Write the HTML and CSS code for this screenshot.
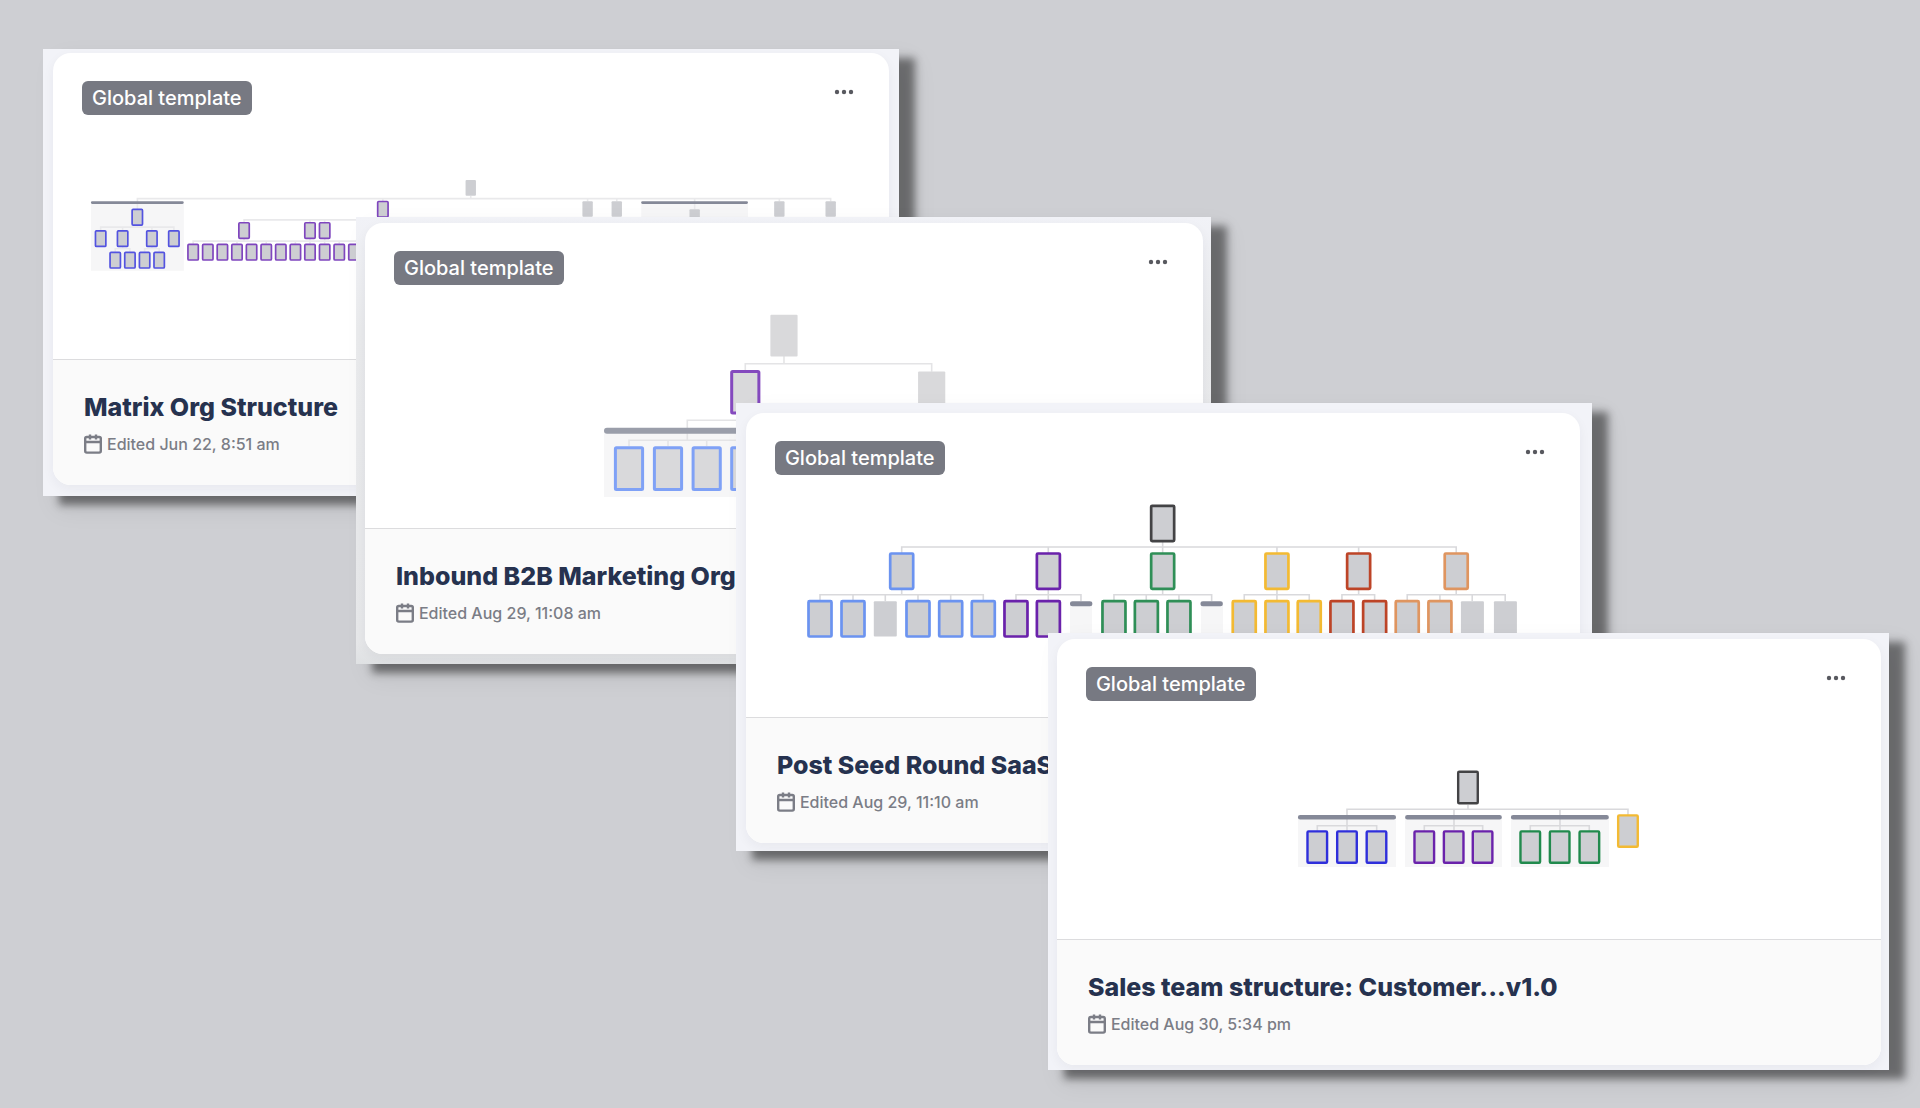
FILE: index.html
```html
<!DOCTYPE html>
<html lang="en">
<head>
    <meta charset="UTF-8">
    <meta name="viewport" content="width=device-width, initial-scale=1.0">
    <title>Org Chart Templates</title>
    <link rel="stylesheet" href="styles.css">
</head>
<body>
    <svg class="sprite" aria-hidden="true">
        <symbol id="dots" viewBox="0 0 30 22">
            <circle cx="8" cy="11" r="2.2"/>
            <circle cx="15" cy="11" r="2.2"/>
            <circle cx="22" cy="11" r="2.2"/>
        </symbol>
        <symbol id="calendar" viewBox="0 0 18 20">
            <rect x="1.2" y="3" width="15.6" height="15.6" rx="1.6"/>
            <path d="M1 8h16M6 0.5v5M12 0.5v5"/>
        </symbol>
    </svg>

    <main class="canvas">
        <!-- Matrix -->
        <section class="frame frame-matrix">
            <article class="card">
                <div class="card-top">
                    <span class="badge">Global template</span>
                    <button class="more" type="button" aria-label="More options"><svg><use href="#dots"/></svg></button>
                </div>
                <svg class="chart chart-matrix" viewBox="53 115 837 244">
                    <rect class="group" x="91" y="202" width="93" height="69"/>
                    <rect class="group" x="642" y="202" width="107" height="69"/>
                    <path class="line" d="M471.3 196v2.7M137.5 209.5V198.7H831.7v3M383.3 198.7v3M588.3 198.7v3M617.5 198.7v3M695.5 198.7v11M780.3 198.7v3"/>
                    <path class="line" d="M137.5 225v2.3M100.7 231v-3.7H174v3.7M122.7 227.3v3M152 227.3v3M122.7 247v2M115.3 252v-3H130v3M152 247v2M144.7 252v-3h14.6v3"/>
                    <path class="line" d="M244.3 223v-3H420M310.3 220v3M325 220v3M193.3 244v-2.7H420M244.3 239v2M310.3 239v5M325 239v5M237.2 241v3M266.5 241v3M295.7 241v3M339.6 241v3"/>
                    <path class="bar" d="M92.3 202.7h90.2M643.3 202.7h104.2"/>
                    <g class="grey">
                        <rect x="466.1" y="180.2"/>
                        <rect x="583.1" y="201.4"/>
                        <rect x="612.3" y="201.4"/>
                        <rect x="690.3" y="209.4"/>
                        <rect x="775.1" y="201.4"/>
                        <rect x="826.5" y="201.4"/>
                    </g>
                    <g class="blue">
                        <rect x="132.2" y="209.6"/>
                        <rect x="95.5" y="231"/>
                        <rect x="117.5" y="231"/>
                        <rect x="146.8" y="231"/>
                        <rect x="168.8" y="231"/>
                        <rect x="110.1" y="252.6"/>
                        <rect x="124.8" y="252.6"/>
                        <rect x="139.5" y="252.6"/>
                        <rect x="154.1" y="252.6"/>
                    </g>
                    <g class="purple">
                        <rect x="378.1" y="201.6"/>
                        <rect x="239.1" y="222.9"/>
                        <rect x="305.1" y="222.9"/>
                        <rect x="319.8" y="222.9"/>
                        <rect x="188.1" y="244.6"/>
                        <rect x="202.8" y="244.6"/>
                        <rect x="217.4" y="244.6"/>
                        <rect x="232" y="244.6"/>
                        <rect x="246.6" y="244.6"/>
                        <rect x="261.3" y="244.6"/>
                        <rect x="275.9" y="244.6"/>
                        <rect x="290.5" y="244.6"/>
                        <rect x="305.1" y="244.6"/>
                        <rect x="319.8" y="244.6"/>
                        <rect x="334.4" y="244.6"/>
                        <rect x="349.1" y="244.6"/>
                    </g>
                </svg>
                <div class="card-info">
                    <h2 class="title">Matrix Org Structure</h2>
                    <p class="edited"><svg class="cal"><use href="#calendar"/></svg>Edited Jun 22, 8:51 am</p>
                </div>
            </article>
        </section>

        <!-- Inbound marketing -->
        <section class="frame frame-inbound">
            <article class="card">
                <div class="card-top">
                    <span class="badge">Global template</span>
                    <button class="more" type="button" aria-label="More options"><svg><use href="#dots"/></svg></button>
                </div>
                <svg class="chart chart-inbound" viewBox="365 285 838 243">
                    <rect class="group" x="604" y="431" width="162" height="66"/>
                    <path class="line" d="M784 356v7.7M745.3 370v-6.3h186.4v8M745.3 413v7.3M687.3 440V420.3H800M629 446v-5.7h116.3v6M668 440v6M706.7 440v6"/>
                    <path class="bar" d="M607 430.7h156"/>
                    <g class="grey">
                        <rect x="770.4" y="314.8"/>
                        <rect x="918.1" y="371.4"/>
                    </g>
                    <g class="purple">
                        <rect x="731.7" y="371.4"/>
                    </g>
                    <g class="blue">
                        <rect x="615.4" y="447.8"/>
                        <rect x="654.4" y="447.8"/>
                        <rect x="693.1" y="447.8"/>
                        <rect x="731.7" y="447.8"/>
                    </g>
                </svg>
                <div class="card-info">
                    <h2 class="title">Inbound B2B Marketing Org</h2>
                    <p class="edited"><svg class="cal"><use href="#calendar"/></svg>Edited Aug 29, 11:08 am</p>
                </div>
            </article>
        </section>

        <!-- Post seed SaaS -->
        <section class="frame frame-saas">
            <article class="card">
                <div class="card-top">
                    <span class="badge">Global template</span>
                    <button class="more" type="button" aria-label="More options"><svg><use href="#dots"/></svg></button>
                </div>
                <svg class="chart chart-saas" viewBox="746 475 834 242">
                    <rect class="group" x="1070" y="604" width="22" height="33"/>
                    <rect class="group" x="1201" y="604" width="22" height="33"/>
                    <path class="line" d="M1162.7 542v11M901.7 553v-6h554.6v6M1048.3 547v6M1277 547v6M1358.7 547v6"/>
                    <path class="line" d="M901.7 589v5.7M820 601v-6.3h163.3v6.3M853 595v6M885.3 595v6M918 595v6M950.7 595v6M1048.3 589v12M1016 601v-6.3h65v6.3"/>
                    <path class="line" d="M1162.7 589v5.7M1114 601v-6.3h97.7v6.3M1146.3 595v6M1179 595v6M1277 589v12M1244.3 601v-6.3h65v6.3"/>
                    <path class="line" d="M1358.7 589v5.7M1342 601v-6.3h32.7v6.3M1456.3 589v5.7M1407.3 601v-6.3h98v6.3M1440 595v6M1472.3 595v6"/>
                    <path class="bar" d="M1072.5 603.7h17.4M1203 603.7h17.4"/>
                    <g class="grey">
                        <rect x="873.8" y="601.2"/>
                        <rect x="1461" y="601.2"/>
                        <rect x="1494" y="601.2"/>
                    </g>
                    <g class="black">
                        <rect x="1151.2" y="505.8"/>
                    </g>
                    <g class="blue">
                        <rect x="890.2" y="553.5"/>
                        <rect x="808.5" y="601.2"/>
                        <rect x="841.5" y="601.2"/>
                        <rect x="906.5" y="601.2"/>
                        <rect x="939.2" y="601.2"/>
                        <rect x="971.8" y="601.2"/>
                    </g>
                    <g class="purple">
                        <rect x="1036.9" y="553.5"/>
                        <rect x="1004.5" y="601.2"/>
                        <rect x="1036.9" y="601.2"/>
                    </g>
                    <g class="green">
                        <rect x="1151.2" y="553.5"/>
                        <rect x="1102.5" y="601.2"/>
                        <rect x="1134.9" y="601.2"/>
                        <rect x="1167.5" y="601.2"/>
                    </g>
                    <g class="yellow">
                        <rect x="1265.5" y="553.5"/>
                        <rect x="1232.8" y="601.2"/>
                        <rect x="1265.5" y="601.2"/>
                        <rect x="1297.8" y="601.2"/>
                    </g>
                    <g class="red">
                        <rect x="1347.2" y="553.5"/>
                        <rect x="1330.5" y="601.2"/>
                        <rect x="1363.2" y="601.2"/>
                    </g>
                    <g class="orange">
                        <rect x="1444.8" y="553.5"/>
                        <rect x="1395.8" y="601.2"/>
                        <rect x="1428.5" y="601.2"/>
                    </g>
                </svg>
                <div class="card-info">
                    <h2 class="title">Post Seed Round SaaS</h2>
                    <p class="edited"><svg class="cal"><use href="#calendar"/></svg>Edited Aug 29, 11:10 am</p>
                </div>
            </article>
        </section>

        <!-- Sales team -->
        <section class="frame frame-sales">
            <article class="card">
                <div class="card-top">
                    <span class="badge">Global template</span>
                    <button class="more" type="button" aria-label="More options"><svg><use href="#dots"/></svg></button>
                </div>
                <svg class="chart chart-sales" viewBox="1057 701 824 238">
                    <rect class="group" x="1298" y="817" width="98" height="50"/>
                    <rect class="group" x="1405" y="817" width="97" height="50"/>
                    <rect class="group" x="1511" y="817" width="98" height="50"/>
                    <path class="line" d="M1468 805v4.3M1347 831v-21.7h281v6M1454 809v21M1560 809v21M1317.3 831v-5.3h59.4v5.3M1424.3 831v-5.3h58.4v5.3M1530.3 831v-5.3h59v5.3"/>
                    <path class="bar" d="M1300.2 817.3h93.6M1407.4 817.3h92.2M1513.2 817.3h93.4"/>
                    <g class="black">
                        <rect x="1458.2" y="771.8"/>
                    </g>
                    <g class="blue">
                        <rect x="1307.5" y="831.4"/>
                        <rect x="1337.2" y="831.4"/>
                        <rect x="1366.7" y="831.4"/>
                    </g>
                    <g class="purple">
                        <rect x="1414.5" y="831.4"/>
                        <rect x="1443.9" y="831.4"/>
                        <rect x="1472.8" y="831.4"/>
                    </g>
                    <g class="green">
                        <rect x="1520.5" y="831.4"/>
                        <rect x="1549.9" y="831.4"/>
                        <rect x="1579.6" y="831.4"/>
                    </g>
                    <g class="yellow">
                        <rect x="1618.2" y="815.4"/>
                    </g>
                </svg>
                <div class="card-info">
                    <h2 class="title">Sales team structure: Customer...v1.0</h2>
                    <p class="edited"><svg class="cal"><use href="#calendar"/></svg>Edited Aug 30, 5:34 pm</p>
                </div>
            </article>
        </section>
    </main>
</body>
</html>
```

FILE: styles.css
```css
* {
    margin: 0;
    padding: 0;
    box-sizing: border-box;
}

body {
    background-color: #cecfd3;
    font-family: Inter, 'Liberation Sans', sans-serif;
}

.sprite {
    position: absolute;
    width: 0;
    height: 0;
}

.canvas {
    position: relative;
    min-height: 100vh;
}

/* overlapping windows */
.frame {
    position: absolute;
    width: 44.58%;
    background-color: #f2f3f8;
    box-shadow: 16px 9px 8px rgba(0, 0, 0, 0.46), 14px 12px 24px rgba(0, 0, 0, 0.08);
}

.frame-matrix {
    left: 2.24%;
    top: 49px;
    padding: 4px 10px 11px;
}

.frame-inbound {
    left: 18.54%;
    top: 217px;
    width: 44.53%;
    padding: 6px 8px 10px 9px;
    background-image: linear-gradient(#f1f2f7, #e9eaec 25%, #e6e7e9 95%, #dfe1e3);
}

.frame-saas {
    left: 38.33%;
    top: 403px;
    padding: 10px 12px 8px 10px;
}

.frame-sales {
    left: 54.58%;
    top: 633px;
    width: 43.8%;
    padding: 6px 8px 5px 9px;
}

.card {
    background-color: #ffffff;
    border-radius: 18px;
    overflow: hidden;
    box-shadow: 0 4px 12px rgba(30, 40, 60, 0.05);
}

.card-top {
    display: flex;
    justify-content: space-between;
    align-items: flex-start;
    padding: 28px 30px 0 29px;
}

.badge {
    padding: 0 10px;
    border-radius: 6px;
    background-color: #777982;
    color: #ffffff;
    font-size: 20px;
    font-weight: 500;
    line-height: 34px;
}

.more {
    width: 30px;
    height: 22px;
    border: none;
    background: none;
    cursor: pointer;
}

.more svg {
    display: block;
    width: 30px;
    height: 22px;
    fill: #58595f;
}

/* charts */
.chart {
    display: block;
    width: 100%;
    fill: #cdced2;
}

.chart .line {
    fill: none;
    stroke: #d9d9dc;
    stroke-width: 1.6;
}

.chart .bar {
    stroke: #858998;
    stroke-linecap: round;
}

.chart .group {
    fill: #f6f6f7;
}

.chart g rect {
    rx: 1px;
}

.chart .grey { stroke: none; }
.chart .black { stroke: #434345; }
.chart .blue { stroke: #6b93f0; }
.chart .purple { stroke: #6a22ab; }
.chart .green { stroke: #2f8f57; }
.chart .yellow { stroke: #f3ba33; }
.chart .red { stroke: #bd4427; }
.chart .orange { stroke: #df9560; }

.chart-matrix g { stroke-width: 1.7; }
.chart-matrix g rect { width: 10.4px; height: 15.6px; }
.chart-matrix .line { stroke: #e9e9eb; }
.chart-matrix .bar { stroke-width: 2.8; }
.chart-matrix .blue { stroke: #5353e0; }
.chart-matrix .purple { stroke: #7f46be; }

.chart-inbound { fill: #d9d9db; }
.chart-inbound g { stroke-width: 3; }
.chart-inbound g rect { width: 27.2px; height: 41.6px; }
.chart-inbound .line { stroke: #e4e4e6; }
.chart-inbound .bar { stroke: #9a9eaa; stroke-width: 6; }
.chart-inbound .blue { stroke: #7fa1f6; }
.chart-inbound .purple { stroke: #8449be; }

.chart-saas g { stroke-width: 2.7; }
.chart-saas g rect { width: 23px; height: 35.3px; }
.chart-saas .bar { stroke-width: 5; }

.chart-sales g { stroke-width: 2.4; }
.chart-sales g rect { width: 19.6px; height: 31.4px; }
.chart-sales .bar { stroke-width: 4.6; }
.chart-sales .blue { stroke: #2f2fdb; }
.chart-sales .green { stroke: #218a4d; }

.card-info {
    padding: 31px 31px 31px;
    border-top: 1px solid #dcdcde;
    background-color: #fafafa;
}

.title {
    margin-bottom: 11px;
    color: #26324f;
    font-size: 25px;
    font-weight: 800;
    line-height: 32px;
    white-space: nowrap;
}

.edited {
    display: flex;
    align-items: center;
    gap: 5px;
    color: #7b7d86;
    font-size: 16px;
    font-weight: 500;
    line-height: 20px;
}

.cal {
    width: 18px;
    height: 20px;
    fill: none;
    stroke: #7b7d86;
    stroke-width: 2.4;
}
```
